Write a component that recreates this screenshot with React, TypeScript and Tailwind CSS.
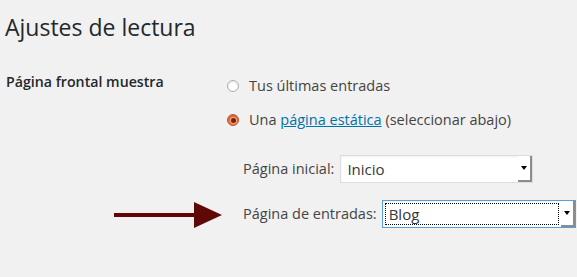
import React from 'react';

function Radio({ checked }: { checked?: boolean }) {
  if (checked) {
    return (
      <span className="ml-[5px] flex h-[12px] w-[12px] shrink-0 items-center justify-center rounded-full border border-[#c9582c] bg-[#e6774a] shadow-[inset_0_1px_2px_rgba(0,0,0,0.2)]">
        <span className="h-[5px] w-[5px] rounded-full bg-[#7a230c] ring-1 ring-[#f2a282]" />
      </span>
    );
  }
  return (
    <span className="ml-[5px] h-[12px] w-[12px] shrink-0 rounded-full border border-[#a9aeb3] bg-white shadow-[inset_0_1px_2px_rgba(0,0,0,0.1)]" />
  );
}

function FakeSelect({
  value,
  focused,
  width,
}: {
  value: string;
  focused?: boolean;
  width: string;
}) {
  return (
    <div
      className={`flex h-[28px] ${width} border bg-white shadow-[inset_0_1px_2px_rgba(0,0,0,0.07)] ${
        focused ? 'border-[#5b9dd9]' : 'border-[#dddddd]'
      }`}
    >
      <div className="flex flex-1 p-[2px]">
        <div
          className={`flex flex-1 items-center pl-[3px] text-[15px] text-[#32373c] ${
            focused ? 'border border-dotted border-black' : 'border border-transparent'
          }`}
        >
          {value}
        </div>
      </div>
      <div className="flex w-[14px] items-center justify-center border-r-2 border-b-2 border-[#8c8c8c] bg-white">
        <svg width="6" height="4" viewBox="0 0 6 4">
          <path d="M0 0h6L3 4z" fill="#000" />
        </svg>
      </div>
    </div>
  );
}

export default function App() {
  return (
    <div className="h-[277px] w-[577px] overflow-hidden bg-[#f1f1f1] font-['Open_Sans',sans-serif]">
      <div className="mt-[13px] pl-[5px] text-[23px] leading-[29px] text-[#23282d]">
        Ajustes de lectura
      </div>

      <div className="mt-[30px] flex">
        <div className="w-[222px] shrink-0 pl-[6px] text-[14.2px] leading-[20px] font-semibold text-[#23282d]">
          Página frontal muestra
        </div>

        <div className="flex flex-col pt-[4px] text-[14.5px] leading-[20px] text-[#444]">
          <div className="flex h-[20px] items-center gap-[10px]">
            <Radio />
            <span>Tus últimas entradas</span>
          </div>
          <div className="mt-[14px] flex h-[20px] items-center gap-[10px]">
            <Radio checked />
            <span>
              Una{' '}
              <a href="#" className="text-[#0073aa] underline">
                página estática
              </a>{' '}
              (seleccionar abajo)
            </span>
          </div>

          <div className="mt-[25px] flex items-center gap-[6px] pl-[21px]">
            <span>Página inicial:</span>
            <FakeSelect value="Inicio" width="w-[193px]" />
          </div>

          <div className="mt-[17px] -ml-[108px] flex items-center">
            <svg width="108" height="28" viewBox="0 0 108 28" className="shrink-0">
              <rect x="0" y="13" width="82" height="4" fill="#5e0808" />
              <path d="M80 2L108 15L80 28z" fill="#5e0808" />
            </svg>
            <div className="ml-[21px] flex items-center gap-[5px]">
              <span>Página de entradas:</span>
              <FakeSelect value="Blog" focused width="w-[194px]" />
            </div>
          </div>
        </div>
      </div>
    </div>
  );
}
